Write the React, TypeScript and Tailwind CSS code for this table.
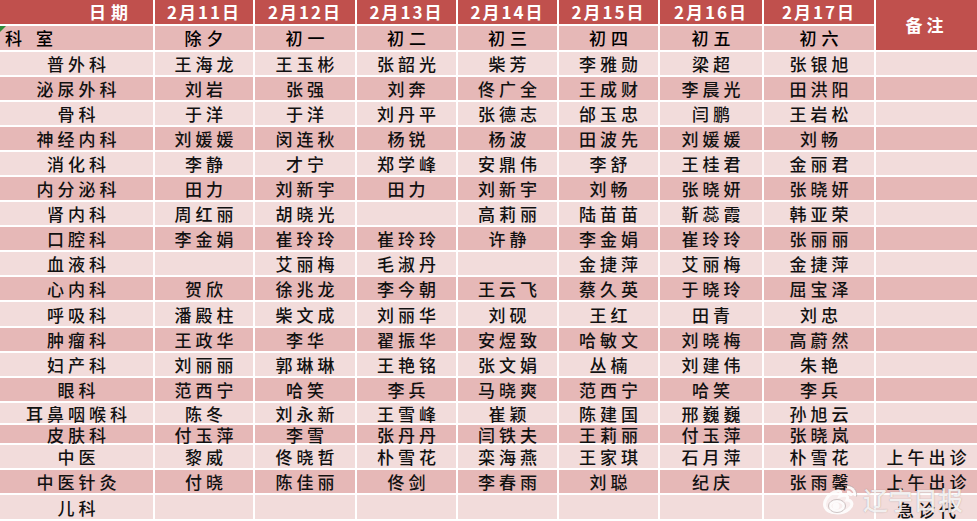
import React from "react";

const COLS = "grid-cols-[155px_100px_102px_101px_101px_101px_104px_112px_101px]";
const DARK = "bg-[#e6b8b7]";
const LIGHT = "bg-[#f2dcdb]";
const RED = "bg-[#c0504d]";

const dates = ["2月11日", "2月12日", "2月13日", "2月14日", "2月15日", "2月16日", "2月17日"];
const lunar = ["除夕", "初一", "初二", "初三", "初四", "初五", "初六"];

// dept, names for 2/11..2/17, remark, row height
const rows: [string, string[], string, number][] = [
  ["普外科", ["王海龙", "王玉彬", "张韶光", "柴芳", "李雅勋", "梁超", "张银旭"], "", 25],
  ["泌尿外科", ["刘岩", "张强", "刘奔", "佟广全", "王成财", "李晨光", "田洪阳"], "", 25],
  ["骨科", ["于洋", "于洋", "刘丹平", "张德志", "邰玉忠", "闫鹏", "王岩松"], "", 25],
  ["神经内科", ["刘媛媛", "闵连秋", "杨锐", "杨波", "田波先", "刘媛媛", "刘畅"], "", 25],
  ["消化科", ["李静", "才宁", "郑学峰", "安鼎伟", "李舒", "王桂君", "金丽君"], "", 25],
  ["内分泌科", ["田力", "刘新宇", "田力", "刘新宇", "刘畅", "张晓妍", "张晓妍"], "", 25],
  ["肾内科", ["周红丽", "胡晓光", "", "高莉丽", "陆苗苗", "靳蕊霞", "韩亚荣"], "", 25],
  ["口腔科", ["李金娟", "崔玲玲", "崔玲玲", "许静", "李金娟", "崔玲玲", "张丽丽"], "", 25],
  ["血液科", ["", "艾丽梅", "毛淑丹", "", "金捷萍", "艾丽梅", "金捷萍"], "", 25],
  ["心内科", ["贺欣", "徐兆龙", "李今朝", "王云飞", "蔡久英", "于晓玲", "屈宝泽"], "", 25],
  ["呼吸科", ["潘殿柱", "柴文成", "刘丽华", "刘砚", "王红", "田青", "刘忠"], "", 26],
  ["肿瘤科", ["王政华", "李华", "翟振华", "安煜致", "哈敏文", "刘晓梅", "高蔚然"], "", 25],
  ["妇产科", ["刘丽丽", "郭琳琳", "王艳铭", "张文娟", "丛楠", "刘建伟", "朱艳"], "", 25],
  ["眼科", ["范西宁", "哈笑", "李兵", "马晓爽", "范西宁", "哈笑", "李兵"], "", 25],
  ["耳鼻咽喉科", ["陈冬", "刘永新", "王雪峰", "崔颖", "陈建国", "邢巍巍", "孙旭云"], "", 22],
  ["皮肤科", ["付玉萍", "李雪", "张丹丹", "闫铁夫", "王莉丽", "付玉萍", "张晓岚"], "", 20],
  ["中医", ["黎威", "佟晓哲", "朴雪花", "栾海燕", "王家琪", "石月萍", "朴雪花"], "上午出诊", 25],
  ["中医针灸", ["付晓", "陈佳丽", "佟剑", "李春雨", "刘聪", "纪庆", "张雨馨"], "上午出诊", 25],
  ["儿科", ["", "", "", "", "", "", ""], "急诊代", 26],
];

const font = { fontFamily: '"Noto Sans CJK SC", "Noto Sans", sans-serif' };

function WeiboLogo() {
  return (
    <svg width="40" height="36" viewBox="0 0 40 36">
      <g fill="none" stroke="#ffffff" strokeWidth="3" opacity="0.9">
        <path d="M17 10 C8 13 3 20 5 26 C8 33 22 34 29 28 C34 24 32 19 27 19 C29 15 26 13 20 15 C22 11 20 9 17 10 Z" fill="#ffffff" fillOpacity="0.55" />
        <ellipse cx="17" cy="25" rx="7" ry="5" />
        <circle cx="16" cy="25" r="2" fill="#ffffff" />
        <path d="M27 6 C32 6 36 10 35 15" />
        <path d="M27 11 C30 11 31 13 31 15" />
      </g>
      <g fill="none" stroke="#9a8a8a" strokeWidth="0.8" opacity="0.6">
        <ellipse cx="17" cy="25" rx="8.5" ry="6.5" />
        <path d="M27 4.5 C33.5 4.5 37.5 10 36.5 15.5" />
      </g>
    </svg>
  );
}

export default function App() {
  return (
    <div className="relative w-[977px] h-[521px] overflow-hidden bg-white" style={font}>
      <div className={`grid ${COLS} grid-rows-[26px_26px] text-white text-[17px] font-semibold`}>
        <div className={`${RED} border-r-2 border-b-2 border-white flex items-center justify-end pr-[20px] tracking-[5px]`}>日期</div>
        {dates.map((d) => (
          <div key={d} className={`${RED} border-r-2 border-b-2 border-white flex items-center justify-center tracking-[2px]`}>{d}</div>
        ))}
        <div className={`${RED} row-span-2 border-b-2 border-white flex items-center justify-center tracking-[4px]`}>备注</div>
        <div className={`${DARK} relative border-r-2 border-b-2 border-white flex items-center pl-[5px] gap-[14px] text-black font-medium`}>
          <span className="absolute left-0 top-0 w-0 h-0 border-t-[6px] border-r-[6px] border-t-[#2e8b3a] border-r-transparent" />
          <span>科</span>
          <span>室</span>
        </div>
        {lunar.map((d, i) => (
          <div key={i} className={`${DARK} border-r-2 border-b-2 border-white flex items-center justify-center tracking-[5px] pl-[5px] text-black font-medium`}>{d}</div>
        ))}
      </div>
      {rows.map(([dept, names, remark, h], r) => {
        const bg = r % 2 === 0 ? LIGHT : DARK;
        return (
          <div key={dept} className={`grid ${COLS} text-[17px] font-medium text-[#111]`} style={{ height: h }}>
            <div className={`${bg} border-r-2 border-b-2 border-white flex items-center justify-center tracking-[4px] pl-[4px] leading-none`}>{dept}</div>
            {names.map((n, i) => (
              <div key={i} className={`${bg} border-r-2 border-b-2 border-white flex items-center justify-center tracking-[4px] pl-[4px] leading-none`}>{n}</div>
            ))}
            <div className={`${bg} border-b-2 border-white flex items-center justify-center tracking-[4px] pl-[4px] leading-none ${dept === "儿科" ? "pt-[4px]" : ""}`}>{remark}</div>
          </div>
        );
      })}
      <div className="absolute left-[820px] top-[481px] flex items-center gap-[3px] pointer-events-none">
        <WeiboLogo />
        <span className="text-[25px] font-medium leading-none text-white/85 [text-shadow:0_0_1px_rgba(80,60,60,0.5)]">辽宁日报</span>
      </div>
    </div>
  );
}
